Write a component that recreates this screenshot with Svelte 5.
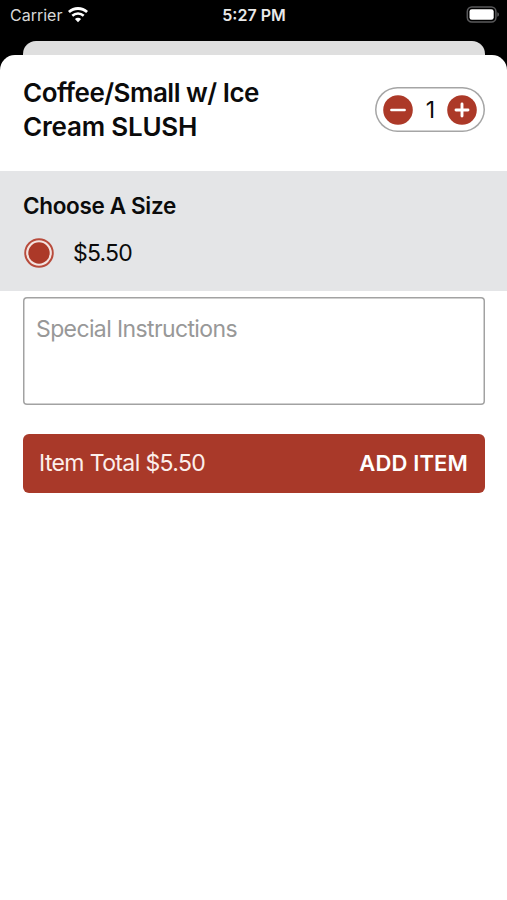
<script>
  let quantity = $state(1);
  let notes = $state('');
  const price = 5.5;
  const total = $derived((price * quantity).toFixed(2));
</script>

<div class="screen">
  <header class="status">
    <div class="carrier">
      <span class="carrier-name">Carrier</span>
      <svg class="wifi" width="20" height="16" viewBox="0 0 20 16" fill="none" stroke="#fff">
        <path d="M.9 5C6.1.3 13.9.3 19.1 5" stroke-width="2.8" />
        <path d="M4.3 8.7C7.6 5.8 12.4 5.8 15.7 8.7" stroke-width="2.6" />
        <path d="M10 15.2L6.9 12.1C8.6 10.4 11.4 10.4 13.1 12.1Z" fill="#fff" stroke="none" />
      </svg>
    </div>
    <span class="clock">5:27 PM</span>
    <div class="power">
      <svg width="34" height="18" viewBox="0 0 34 18">
        <rect x="1.3" y="1" width="28.6" height="15" rx="4.5" fill="#000" stroke="#59595b" stroke-width="1.5" />
        <rect x="3.5" y="3.2" width="24.2" height="10.6" rx="2.4" fill="#fff" />
        <path d="M31.3 6.2Q33 6.8 33 8.5T31.3 10.8Z" fill="#59595b" />
      </svg>
    </div>
  </header>
  <div class="back-sheet"></div>
  <main class="sheet">
    <section class="heading">
      <h1>Coffee/Small w/ Ice<br /><span class="line2">Cream SLUSH</span></h1>
      <div class="stepper">
        <button aria-label="Decrease" onclick={() => (quantity = Math.max(1, quantity - 1))}>
          <svg width="30" height="30" viewBox="0 0 30 30"><circle cx="15" cy="15" r="14.8" fill="#ac3928" /><path d="M8.4 15H21.6" stroke="#fff" stroke-width="2.5" stroke-linecap="round" /></svg>
        </button>
        <span class="count">{quantity}</span>
        <button aria-label="Increase" onclick={() => quantity++}>
          <svg width="30" height="30" viewBox="0 0 30 30"><circle cx="15" cy="15" r="14.8" fill="#ac3928" /><path d="M9 15H21M15 9V21" stroke="#fff" stroke-width="2.9" stroke-linecap="round" /></svg>
        </button>
      </div>
    </section>
    <section class="sizes">
      <h2>Choose A Size</h2>
      <div class="option">
        <svg width="32" height="32" viewBox="0 0 32 32"><circle cx="16" cy="16" r="13.8" fill="#f3e3e0" stroke="#b84b3c" stroke-width="1.9" /><circle cx="16" cy="16" r="10.7" fill="#ac3928" /></svg>
        <span class="price">${price.toFixed(2)}</span>
      </div>
    </section>
    <section class="order">
      <textarea placeholder="Special Instructions" bind:value={notes}></textarea>
      <button class="add">
        <span class="total">Item Total ${total}</span>
        <span class="action">ADD ITEM</span>
      </button>
    </section>
  </main>
</div>

<style>
  :global(body) { margin: 0; background: #000; }
  .screen { width: 507px; height: 900px; overflow: hidden; background: #000; font-family: Inter, "Liberation Sans", sans-serif; color: #0b0b0b; display: flex; flex-direction: column; }
  button { border: 0; padding: 0; margin: 0; background: none; font-family: inherit; display: flex; }
  svg { display: block; flex: none; }
  .status { height: 41px; flex: none; box-sizing: border-box; padding: 5px 7px 0 10px; display: grid; grid-template-columns: 1fr auto 1fr; align-items: start; color: #fff; }
  .carrier { display: flex; align-items: center; gap: 6px; height: 20px; }
  .carrier-name { font-size: 16px; line-height: 20px; color: #d8d8d8; letter-spacing: 0; }
  .clock { font-size: 16px; line-height: 20px; font-weight: 600; color: #e9e9e9; padding-right: 2px; }
  .power { display: flex; justify-content: flex-end; padding-top: 1px; }
  .back-sheet { height: 14px; flex: none; margin: 0 22px 0 23px; background: #dfdfdf; border-radius: 13px 13px 0 0; }
  .sheet { flex: 1; background: #fff; border-radius: 15px 15px 0 0; }
  .heading { height: 116px; box-sizing: border-box; padding: 21px 22px 0 23px; display: flex; justify-content: space-between; align-items: flex-start; }
  h1 { margin: 0; font-size: 26px; line-height: 34px; font-weight: 600; letter-spacing: -0.5px; white-space: nowrap; }
  .line2 { letter-spacing: -0.2px; }
  .stepper { margin-top: 11px; width: 110px; height: 45px; box-sizing: border-box; box-shadow: inset 0 0 0 1.5px #a5a5a5; border-radius: 23px; padding: 0 8px; display: flex; align-items: center; justify-content: space-between; }
  .count { font-size: 23px; line-height: 30px; padding-left: 1px; }
  .sizes { height: 120px; box-sizing: border-box; background: #e4e5e7; padding: 20px 23px 0; }
  h2 { margin: 0; font-size: 22.5px; line-height: 30px; font-weight: 600; letter-spacing: -0.34px; }
  .option { display: flex; align-items: center; gap: 18px; height: 32px; margin-top: 16px; }
  .price { font-size: 23px; line-height: 30px; letter-spacing: -0.8px; }
  .order { padding: 6px 22px 0 23px; }
  textarea { display: block; box-sizing: border-box; width: 100%; height: 108px; border: 0; box-shadow: inset 0 0 0 1.5px #a2a2a2; border-radius: 4px; resize: none; outline: 0; margin: 0; padding: 17px 13px; font-family: inherit; font-size: 23px; line-height: 30px; letter-spacing: -0.62px; background: #fff; }
  textarea::placeholder { color: #989898; opacity: 1; }
  .add { width: 100%; height: 59px; box-sizing: border-box; margin-top: 29px; background: #a93929; border-radius: 6px; padding: 0 17px 2px 16px; justify-content: space-between; align-items: center; color: #fff; font-size: 23px; line-height: 30px; }
  .total { color: #fcefeb; letter-spacing: -0.62px; }
  .action { font-weight: 600; font-size: 22px; letter-spacing: 0.15px; }
</style>
